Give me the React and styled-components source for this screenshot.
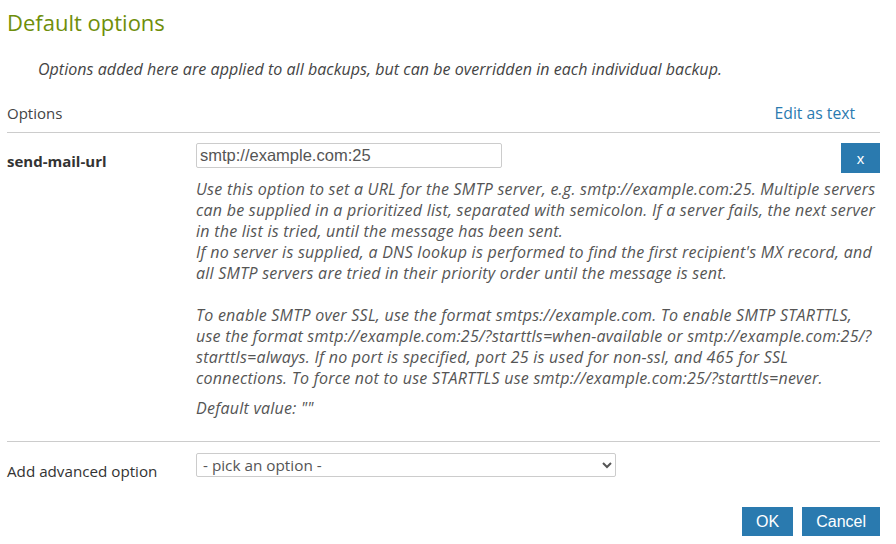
import React from 'react'
import styled, { createGlobalStyle } from 'styled-components'

const GlobalStyle = createGlobalStyle`
  body {
    margin: 0;
    background: #fff;
    font-family: "Open Sans", "Noto Sans", sans-serif;
    color: #333;
  }
`

const descLines = [
  'Use this option to set a URL for the SMTP server, e.g. smtp://example.com:25. Multiple servers',
  'can be supplied in a prioritized list, separated with semicolon. If a server fails, the next server',
  'in the list is tried, until the message has been sent.',
  "If no server is supplied, a DNS lookup is performed to find the first recipient's MX record, and",
  'all SMTP servers are tried in their priority order until the message is sent.',
  '',
  'To enable SMTP over SSL, use the format smtps://example.com. To enable SMTP STARTTLS,',
  'use the format smtp://example.com:25/?starttls=when-available or smtp://example.com:25/?',
  'starttls=always. If no port is specified, port 25 is used for non-ssl, and 465 for SSL',
  'connections. To force not to use STARTTLS use smtp://example.com:25/?starttls=never.',
]

export default function App() {
  return (
    <>
      <GlobalStyle />
      <Page>
        <Title>Default options</Title>
        <Intro>Options added here are applied to all backups, but can be overridden in each individual backup.</Intro>

        <HeaderRow>
          <span>Options</span>
          <LinkText>Edit as text</LinkText>
        </HeaderRow>

        <OptionRow>
          <OptionName>send-mail-url</OptionName>
          <OptionBody>
            <InputLine>
              <TextInput defaultValue="smtp://example.com:25" />
              <RemoveButton>x</RemoveButton>
            </InputLine>
            <Description>
              {descLines.map((l, i) => (
                <DescLine key={i}>{l || '\u00a0'}</DescLine>
              ))}
            </Description>
            <DefaultValue>Default value: ""</DefaultValue>
          </OptionBody>
        </OptionRow>

        <AdvancedRow>
          <AdvancedLabel>Add advanced option</AdvancedLabel>
          <Select defaultValue="">
            <option value="">- pick an option -</option>
          </Select>
        </AdvancedRow>

        <Actions>
          <ActionButton>OK</ActionButton>
          <ActionButton>Cancel</ActionButton>
        </Actions>
      </Page>
    </>
  )
}

const Page = styled.div`
  width: 873px;
  padding: 0 16px 0 7px;
`

const Title = styled.h1`
  margin: 0;
  padding-top: 7px;
  font-size: 22px;
  font-weight: 400;
  line-height: 30px;
  color: #6e8e0a;
`

const Intro = styled.p`
  margin: 22px 0 0;
  padding-left: 31px;
  font-size: 16px;
  font-style: italic;
  letter-spacing: 0.05px;
  line-height: 20px;
  color: #444;
`

const HeaderRow = styled.div`
  display: flex;
  justify-content: space-between;
  align-items: center;
  margin-top: 24px;
  padding: 0 25px 9px 0;
  border-bottom: 1px solid #ccc;
  font-size: 15px;
  line-height: 20px;
  color: #444;
`

const LinkText = styled.a`
  font-size: 15.7px;
  color: #2a7ab0;
  cursor: pointer;
`

const OptionRow = styled.div`
  display: grid;
  grid-template-columns: 189px 1fr;
  padding: 10px 0 22px;
  border-bottom: 1px solid #ccc;
`

const OptionName = styled.div`
  padding-top: 8px;
  font-size: 15px;
  font-weight: 700;
  line-height: 20px;
  color: #333;
`

const OptionBody = styled.div`
  display: flex;
  flex-direction: column;
`

const InputLine = styled.div`
  display: flex;
  justify-content: space-between;
  align-items: flex-start;
`

const TextInput = styled.input`
  box-sizing: border-box;
  width: 306px;
  height: 25px;
  padding: 0 3px;
  border: 1px solid #ccc;
  border-radius: 2px;
  font-family: "Liberation Sans", Arial, sans-serif;
  font-size: 16.5px;
  color: #555;
  outline: none;
`

const RemoveButton = styled.button`
  width: 39px;
  height: 30px;
  border: none;
  background: #2a7aaf;
  color: #fff;
  font-family: "Liberation Sans", Arial, sans-serif;
  font-size: 15px;
  cursor: pointer;
`

const Description = styled.div`
  margin-top: 6px;
  font-size: 16px;
  font-style: italic;
  letter-spacing: 0.25px;
  line-height: 21px;
  color: #555;
`

const DescLine = styled.div`
  white-space: nowrap;
`

const DefaultValue = styled.div`
  margin-top: 9px;
  font-size: 16px;
  font-style: italic;
  letter-spacing: 0.25px;
  line-height: 21px;
  color: #555;
`

const AdvancedRow = styled.div`
  display: grid;
  grid-template-columns: 189px 420px;
  align-items: start;
  padding-top: 11px;
`

const AdvancedLabel = styled.div`
  padding-top: 8px;
  font-size: 15.2px;
  line-height: 20px;
  color: #333;
`

const Select = styled.select`
  height: 24px;
  border: 1px solid #ccc;
  border-radius: 2px;
  background: #fff;
  font-family: "Open Sans", sans-serif;
  font-size: 15.3px;
  color: #555;
  padding: 0 2px;
`

const Actions = styled.div`
  display: flex;
  justify-content: flex-end;
  gap: 9px;
  margin-top: 26px;
`

const ActionButton = styled.button`
  height: 29px;
  padding: 0 14px;
  border: none;
  background: #2a7aaf;
  color: #fff;
  font-family: "Liberation Sans", Arial, sans-serif;
  font-size: 16px;
  cursor: pointer;
`
